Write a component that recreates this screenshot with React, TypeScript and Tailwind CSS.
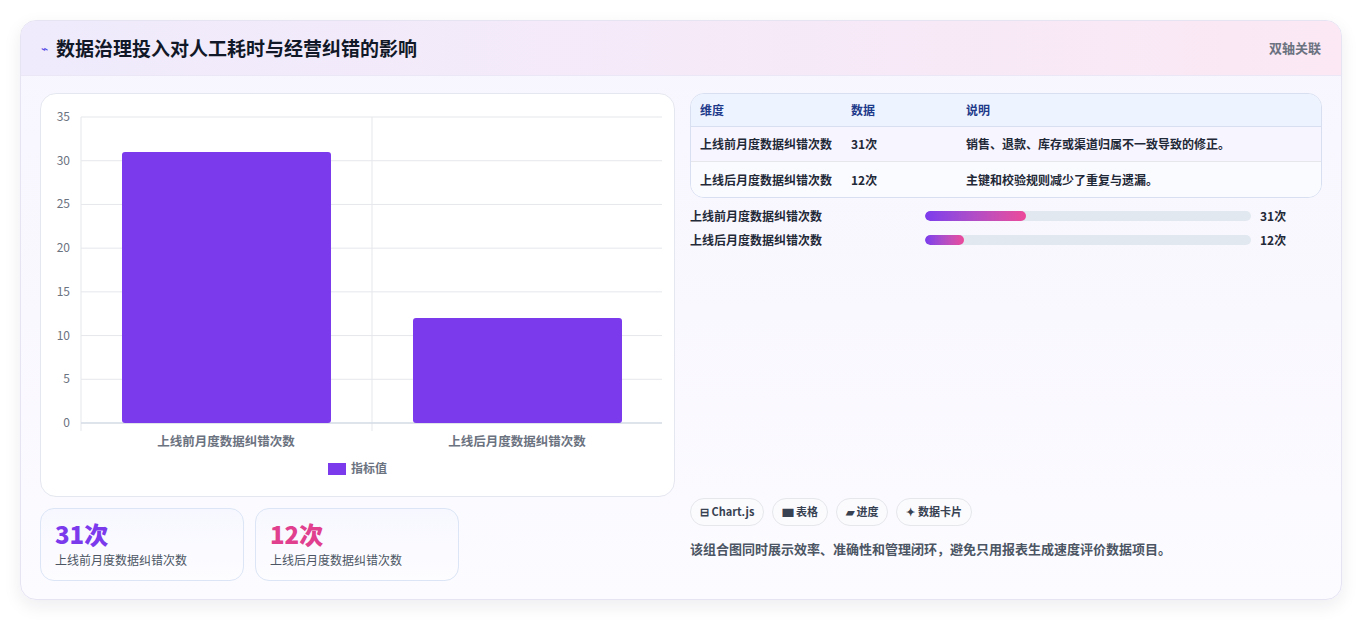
import React from "react";

const F = { fontFamily: '"Noto Sans CJK SC", "Noto Sans", sans-serif' };

function Chart() {
  const y0 = 421 - 92, top = 115 - 92; // relative to card top at 92
  const sc = (y0 - top) / 35;
  const ticks = [0, 5, 10, 15, 20, 25, 30, 35];
  return (
    <svg width="635" height="404" className="block">
      {ticks.map((t) => (
        <g key={t}>
          <line x1={40} x2={621} y1={y0 - t * sc} y2={y0 - t * sc} stroke="#e5e7eb" />
          <text x={29} y={y0 - t * sc + 4} textAnchor="end" fontSize="12" fill="#6b7280">{t}</text>
        </g>
      ))}
      <line x1={40} x2={40} y1={top} y2={y0 + 8} stroke="#e5e7eb" />
      <line x1={331} x2={331} y1={top} y2={y0 + 8} stroke="#e5e7eb" />
      <line x1={40} x2={621} y1={y0} y2={y0} stroke="#cbd5e1" />
      <rect x={81} y={y0 - 31 * sc} width={209} height={31 * sc} rx={3} fill="#7c3aed" />
      <rect x={372} y={y0 - 12 * sc} width={209} height={12 * sc} rx={3} fill="#7c3aed" />
      <text x={185} y={352} textAnchor="middle" fontSize="12.5" fontWeight="600" fill="#6b7280">上线前月度数据纠错次数</text>
      <text x={476} y={352} textAnchor="middle" fontSize="12.5" fontWeight="600" fill="#6b7280">上线后月度数据纠错次数</text>
      <rect x={287} y={369} width={18} height={12} fill="#7c3aed" />
      <text x={310} y={379} fontSize="12" fontWeight="600" fill="#6b7280">指标值</text>
    </svg>
  );
}

export default function App() {
  const rows = [
    ["上线前月度数据纠错次数", "31次", "销售、退款、库存或渠道归属不一致导致的修正。"],
    ["上线后月度数据纠错次数", "12次", "主键和校验规则减少了重复与遗漏。"],
  ];
  return (
    <div style={F} className="w-[1363px] h-[621px] bg-white pt-[20px] px-[20px] overflow-hidden">
      <div className="w-[1322px] h-[580px] rounded-[16px] border border-[#e6e3f3] shadow-[0_6px_18px_rgba(30,30,60,0.08)] bg-gradient-to-b from-[#f7f5fe] to-[#fcfbff] overflow-hidden flex flex-col">
        <div className="h-[55px] shrink-0 flex items-center justify-between px-[20px] bg-gradient-to-r from-[#efebfc] to-[#fbe8f4] border-b border-[#ece7f7]">
          <div className="flex items-center gap-[8px]">
            <span className="text-[12px] text-[#4f46e5]">⌁</span>
            <span className="text-[19px] font-bold text-[#111827]">数据治理投入对人工耗时与经营纠错的影响</span>
          </div>
          <span className="text-[13px] font-semibold text-[#6b7280]">双轴关联</span>
        </div>
        <div className="flex gap-[15px] px-[19px] pt-[17px]">
          <div className="w-[635px] flex flex-col gap-[11px]">
            <div className="h-[404px] rounded-[16px] border border-[#e5e7f0] bg-white"><Chart /></div>
            <div className="flex gap-[11px]">
              {[["31次", "text-[#7c3aed]", "上线前月度数据纠错次数"], ["12次", "text-[#e0408e]", "上线后月度数据纠错次数"]].map(([v, c, l]) => (
                <div key={v} className="w-[204px] h-[73px] rounded-[14px] border border-[#dbe5f5] bg-gradient-to-b from-[#f7f8ff] to-[#fdfcff] px-[14px] pt-[10px]">
                  <div className={`text-[24px] leading-[30px] font-extrabold ${c}`}>{v}</div>
                  <div className="text-[12px] text-[#4b5563] mt-[2px]">{l}</div>
                </div>
              ))}
            </div>
          </div>
          <div className="flex-1 flex flex-col">
            <div className="rounded-[14px] border border-[#d7dff0] overflow-hidden text-[12px]">
              <div className="flex h-[33px] items-center bg-[#eef4ff] border-b border-[#d7dff0] font-bold text-[#1e3a8a] px-[9px]">
                <span className="w-[151px]">维度</span><span className="w-[115px]">数据</span><span>说明</span>
              </div>
              {rows.map((r, i) => (
                <div key={i} className={`flex h-[35px] items-center px-[9px] font-semibold text-[#1f2937] ${i === 0 ? "bg-[#f7f5ff] border-b border-[#e5e7eb]" : "bg-[#fafbff]"}`}>
                  <span className="w-[151px]">{r[0]}</span><span className="w-[115px]">{r[1]}</span><span>{r[2]}</span>
                </div>
              ))}
            </div>
            <div className="flex flex-col gap-[12px] mt-[12px] text-[12px] font-semibold text-[#1f2937]">
              {[[31, "上线前月度数据纠错次数"], [12, "上线后月度数据纠错次数"]].map(([v, l]) => (
                <div key={l} className="flex items-center h-[12px]">
                  <span className="w-[235px]">{l}</span>
                  <div className="w-[326px] h-[10px] rounded-full bg-[#e2e8f0] overflow-hidden">
                    <div className="h-full rounded-full bg-gradient-to-r from-[#7c3aed] to-[#ec4899]" style={{ width: `${((v as number) / 100) * 326 * 1.0}px` }} />
                  </div>
                  <span className="ml-[9px] font-bold">{v}次</span>
                </div>
              ))}
            </div>
            <div className="flex-1" />
            <div className="flex gap-[8px] text-[11px] font-bold text-[#374151]">
              {["⊟ Chart.js", "▆ 表格", "▰ 进度", "✦ 数据卡片"].map((t) => (
                <span key={t} className="h-[28px] px-[9px] flex items-center rounded-full border border-[#e5e7eb] bg-[#fbfbfe]">{t}</span>
              ))}
            </div>
            <div className="mt-[13px] mb-[23px] text-[13px] font-semibold text-[#4b5563]">该组合图同时展示效率、准确性和管理闭环，避免只用报表生成速度评价数据项目。</div>
          </div>
        </div>
      </div>
    </div>
  );
}
